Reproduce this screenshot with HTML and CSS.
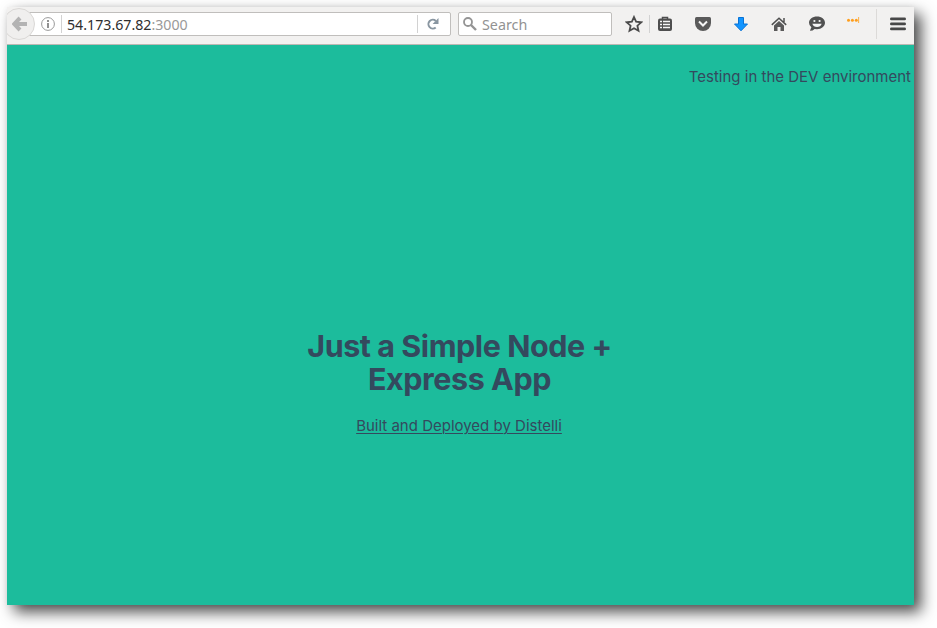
FILE: index.html
```html
<!DOCTYPE html>
<html lang="en">
<head>
<meta charset="utf-8">
<title>Node App</title>
<link rel="stylesheet" href="styles.css">
</head>
<body>
<div class="window">
  <header class="toolbar">
    <div class="back"><svg width="16" height="16" viewBox="0 0 16 16"><path d="M8 2L2.2 8 8 14M3 8h12" fill="none" stroke="#b3b3b3" stroke-width="4"/></svg></div>
    <div class="address">
      <svg class="info" width="14" height="14" viewBox="0 0 14 14"><circle cx="7" cy="7" r="6.4" fill="none" stroke="#999"/><path d="M7 3v2M7 6v5" stroke="#858585" stroke-width="1.8"/></svg>
      <i class="rule"></i>
      <span class="url">54.173.67.82<span class="port">:3000</span></span>
      <i class="rule reload-rule"></i>
      <svg class="reload" width="12" height="12" viewBox="0 0 12 12"><path d="M8.7 9.5A4.4 4.4 0 1 1 8.8 2.9" fill="none" stroke="#8996a1" stroke-width="2"/><path d="M11.5 0v6H5.6z" fill="#8996a1"/></svg>
    </div>
    <div class="search">
      <svg width="14" height="14" viewBox="0 0 14 14"><circle cx="5" cy="5" r="4" fill="none" stroke="#949494" stroke-width="1.8"/><path d="M8 8l5 5" stroke="#949494" stroke-width="2.4"/></svg>
      <span class="hint">Search</span>
    </div>
    <div class="tool star"><svg width="18" height="18" viewBox="0 0 18 18"><path d="M9 2l2.1 4.7 5.1.6-3.8 3.4 1.1 5.1L9 13.2l-4.5 2.6 1.1-5.1-3.8-3.4 5.1-.6z" fill="none" stroke="#4b4b4b" stroke-width="1.8"/></svg></div>
    <i class="rule"></i>
    <div class="tools">
      <div class="tool"><svg width="16" height="16" viewBox="0 0 16 16"><path d="M5.5 3V1.4h5V3" fill="none" stroke="#4e4e4e" stroke-width="1.5"/><rect x="1" y="2.5" width="14" height="12.5" rx="2" fill="#4e4e4e"/><path d="M3 5.5h2M3 8.5h2M3 11.5h2M6 5.5h7M6 8.5h7M6 11.5h7" stroke="#f5f5f5" stroke-width="1.7"/></svg></div>
      <div class="tool"><svg width="16" height="16" viewBox="0 0 16 16"><path d="M1.5 1h13Q16 1 16 2.5V7a8 8 0 0 1-16 0V2.5Q0 1 1.5 1z" fill="#5a5a5a"/><path d="M4 5.5l4 4 4-4" fill="none" stroke="#f5f5f5" stroke-width="2"/></svg></div>
      <div class="tool"><svg width="16" height="16" viewBox="0 0 16 16"><path d="M5.5 1.5h5V8h4L8 14.8 1.5 8h4z" fill="#1295ff" stroke="#0872d5"/></svg></div>
      <div class="tool"><svg width="16" height="16" viewBox="0 0 16 16"><path d="M.8 8.9L8 2.2l7.2 6.7M13 2v4" fill="none" stroke="#505050" stroke-width="1.5"/><path d="M3 9.5L8 5l5 4.5V15H9.5v-4h-3v4H3z" fill="#5a5a5a"/></svg></div>
      <div class="tool"><svg width="16" height="16" viewBox="0 0 16 16"><path d="M8 .5c4.5 0 8 2.7 8 6.3s-3.5 6.4-8 6.4l-2.4-.3Q4 14.8.9 14.8l1.5-3.5Q0 9.5 0 6.8C0 3.2 3.5.5 8 .5z" fill="#515151"/><circle cx="5.4" cy="5" r="1.1" fill="#f5f5f5"/><circle cx="10.6" cy="5" r="1.1" fill="#f5f5f5"/><path d="M3.3 7.8h9.4Q11.5 11 8 11T3.3 7.8z" fill="#f5f5f5"/></svg></div>
      <div class="tool"><svg width="16" height="16" viewBox="0 0 16 16"><g fill="#ff9e1c"><circle cx="1.5" cy="4.2" r="1.5"/><circle cx="5.4" cy="4.2" r="1.5"/><circle cx="9.3" cy="4.2" r="1.5"/><path d="M11.3 1h.8v6h-.8z"/></g></svg></div>
    </div>
    <i class="rule tall"></i>
    <div class="menu"><svg width="16" height="14" viewBox="0 0 16 14"><path d="M1.4 1.9h13.2M1.4 6.9h13.2M1.4 11.9h13.2" stroke="#484848" stroke-width="2.8" stroke-linecap="round"/></svg></div>
  </header>
  <main class="page">
    <p class="env">Testing in the DEV environment</p>
    <h1>Just a Simple Node +<br>Express App</h1>
    <a class="credit">Built and Deployed by Distelli</a>
  </main>
</div>
</body>
</html>
```
FILE: styles.css
```css
* { box-sizing: border-box; }
body { height: 628px; margin: 0; padding: 7px; background: #fff; overflow: hidden; font-family: "Open Sans", sans-serif; }
svg { display: block; flex: none; }
.window {
  width: 907px;
  height: 598px;
  box-shadow: 7px 7px 14px rgba(0, 0, 0, .7), 0 0 6px rgba(0, 0, 0, .05);
}
.toolbar {
  display: flex;
  align-items: center;
  height: 38px;
  padding-bottom: 3px;
  overflow: hidden;
  background: #f2f1f0;
  border-bottom: 1px solid #bdb8b4;
}
.back {
  display: flex;
  align-items: center;
  flex: none;
  z-index: 1;
  width: 32px;
  height: 32px;
  margin-left: -4px;
  padding-left: 8px;
  border: 1px solid #dad8d6;
  border-radius: 50%;
  background: #f0efee;
}
.address, .search {
  display: flex;
  align-items: center;
  flex: none;
  height: 24px;
  background: #fff;
  border: 1px solid #c0bebc;
  border-radius: 2px;
}
.address { width: 426px; margin-left: -10px; padding-left: 15px; }
.rule { flex: none; width: 1px; height: 18px; background: #d2d2d2; }
.info { margin-right: 6px; }
.url { margin-left: 5px; padding-top: 2px; font: 14.2px/20px "Noto Sans", sans-serif; color: #2e2e2e; white-space: nowrap; }
.port { color: #999; }
.reload-rule { margin-left: auto; }
.reload { margin: 0 11px 0 9px; }
.search { width: 154px; margin-left: 7px; padding-left: 4px; }
.hint { margin-left: 5px; padding-top: 2px; font: 14.3px/20px "Noto Sans", sans-serif; color: #929292; }
.tool { display: flex; align-items: center; justify-content: center; flex: none; width: 38px; }
.star { width: 18px; margin: 0 6px 0 13px; }
.tools { display: flex; margin-left: -4px; }
.tall { height: 30px; margin-left: 2px; background: #dcdad8; }
.menu { margin-left: 13px; }
.page {
  display: flex;
  flex-direction: column;
  align-items: center;
  height: 560px;
  background: #1cbc9c;
  color: #34495e;
  font-family: Inter, sans-serif;
}
.env {
  align-self: flex-end;
  margin: 22px 3px 0 0;
  font-size: 15px;
  line-height: 20px;
  white-space: nowrap;
}
h1 { margin: 242px 2px 0 0; font-size: 30.5px; letter-spacing: -.45px; line-height: 33px; text-align: center; white-space: nowrap; }
.credit { margin: 21px 3px 0 0; font-size: 15px; line-height: 20px; white-space: nowrap; text-decoration: underline; text-decoration-thickness: 1px; text-underline-offset: 2px; }
```
